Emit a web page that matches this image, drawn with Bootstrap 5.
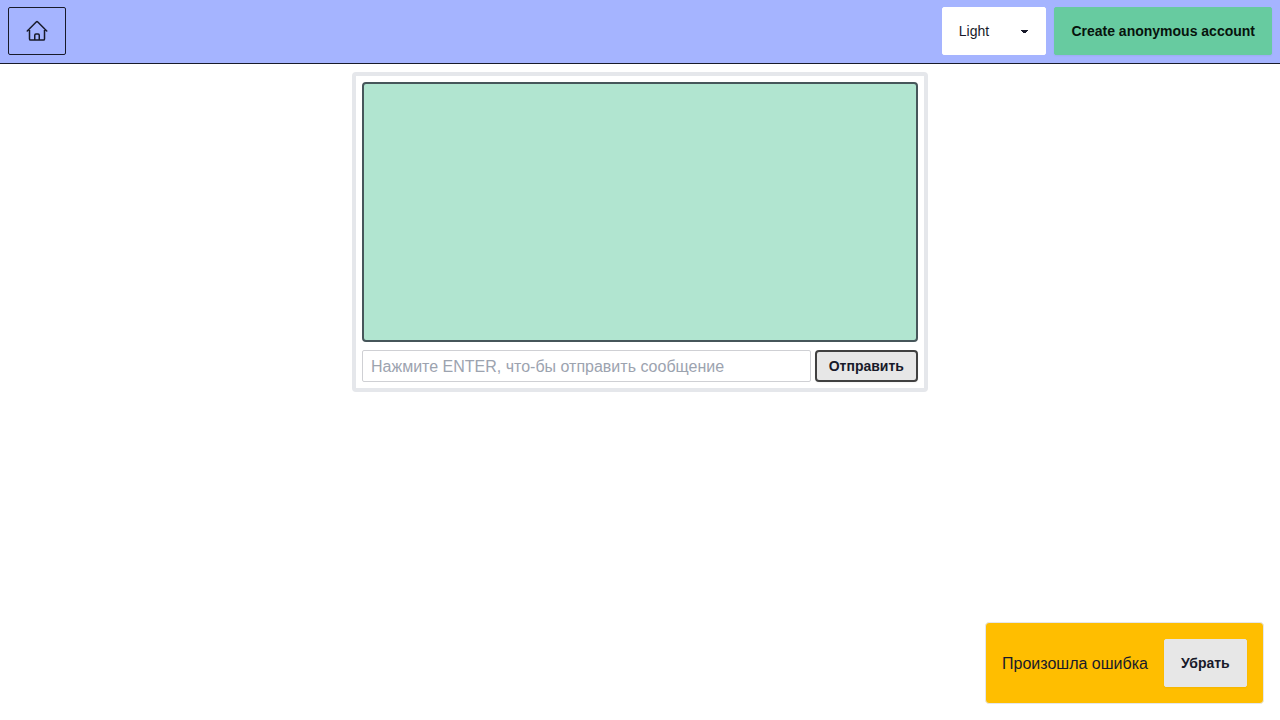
<!DOCTYPE html>
<html lang="ru">
<head>
<meta charset="utf-8">
<meta name="viewport" content="width=device-width, initial-scale=1">
<title>Chat</title>
<link href="https://cdn.jsdelivr.net/npm/bootstrap@5.3.0/dist/css/bootstrap.min.css" rel="stylesheet">
<style>
  body { font-family: "Liberation Sans", Arial, sans-serif; color: #181a2a; line-height: 24px; background: #fff; }
  .topbar { height: 64px; padding: 7px 8px 8px; background: #a5b4ff; border-bottom: 1px solid #181a2a; }
  .app-btn { --bs-btn-font-size: 14px; --bs-btn-font-weight: 700; --bs-btn-line-height: 14px; --bs-btn-padding-x: 16px; --bs-btn-padding-y: 0; --bs-btn-border-radius: 2px; --bs-btn-color: #181a2a; --bs-btn-bg: #e7e7e7; --bs-btn-border-color: #e7e7e7; --bs-btn-hover-color: #181a2a; --bs-btn-hover-bg: #d4d4d4; --bs-btn-hover-border-color: #d4d4d4; height: 48px; box-shadow: 0 1px 2px rgba(0,0,0,.05); }
  .btn-home { --bs-btn-bg: transparent; --bs-btn-border-color: #181a2a; box-shadow: none; padding-bottom: 1px; }
  .btn-account { --bs-btn-bg: #67cba0; --bs-btn-border-color: #67cba0; --bs-btn-color: #07130d; }
  .btn-send { --bs-btn-padding-x: 12px; --bs-btn-border-width: 2px; --bs-btn-border-color: #404040; --bs-btn-border-radius: 4px; width: 103px; height: 32px; padding-left: 11.6px; }
  .theme-select { width: 104px; height: 48px; padding: 0 40px 0 15.4px; font-size: 14px; line-height: 28px; color: #181a2a; border: 1px solid #fff; border-radius: 2px; background-color: #fff;
    background-image: linear-gradient(currentColor, currentColor), linear-gradient(currentColor, currentColor), linear-gradient(currentColor, currentColor);
    background-position: 78px 22px, 79px 23px, 80px 24px; background-size: 7px 1px, 5px 1px, 3px 1px; }
  .chat { width: 576px; height: 320px; border: 4px solid #e5e7eb; border-radius: 4px; padding: 6px; }
  .messages { border: 2px solid #46565a; border-radius: 4px; background: #b1e5d0; }
  .message-input { height: 32px; padding: 2px 8px 0; font-size: 16px; line-height: 24px; border: 1px solid #cfd0d4; border-radius: 2px; }
  .message-input::placeholder { color: #9ca3af; }
  .error-toast { background: #ffbe00; border: 1px solid #e5e7eb; border-radius: 4px; padding: 16px; height: 82px; margin-right: .3px; }
  .error-text { padding-top: 2px; }
</style>
</head>
<body class="vh-100 overflow-hidden">
<nav class="topbar d-flex align-items-center justify-content-between">
  <a href="#" class="btn app-btn btn-home d-inline-flex align-items-center" aria-label="Home">
    <svg width="24" height="24" viewBox="0 0 24 24" fill="none" stroke="currentColor" stroke-width="1.5" stroke-linecap="round" stroke-linejoin="round"><path d="m2.25 12 8.954-8.955c.44-.439 1.152-.439 1.591 0L21.75 12M4.5 9.75v10.125c0 .621.504 1.125 1.125 1.125H9.75v-4.875c0-.621.504-1.125 1.125-1.125h2.25c.621 0 1.125.504 1.125 1.125V21h4.125c.621 0 1.125-.504 1.125-1.125V9.75M8.25 21h8.25"/></svg>
  </a>
  <div class="d-flex gap-2">
    <select class="form-select theme-select" aria-label="Theme"><option>Light</option><option>Dark</option></select>
    <button type="button" class="btn app-btn btn-account text-nowrap">Create anonymous account</button>
  </div>
</nav>
<main class="chat mx-auto mt-2 d-flex flex-column gap-2">
  <div class="messages flex-grow-1"></div>
  <form class="d-flex gap-1">
    <input type="text" class="form-control message-input" placeholder="Нажмите ENTER, что-бы отправить сообщение">
    <button type="button" class="btn app-btn btn-send flex-shrink-0">Отправить</button>
  </form>
</main>
<div class="position-fixed bottom-0 end-0 p-3">
  <div class="error-toast d-flex align-items-center gap-3" role="alert">
    <span class="error-text">Произошла ошибка</span>
    <button type="button" class="btn app-btn">Убрать</button>
  </div>
</div>
<script src="https://cdn.jsdelivr.net/npm/bootstrap@5.3.0/dist/js/bootstrap.bundle.min.js"></script>
</body>
</html>
